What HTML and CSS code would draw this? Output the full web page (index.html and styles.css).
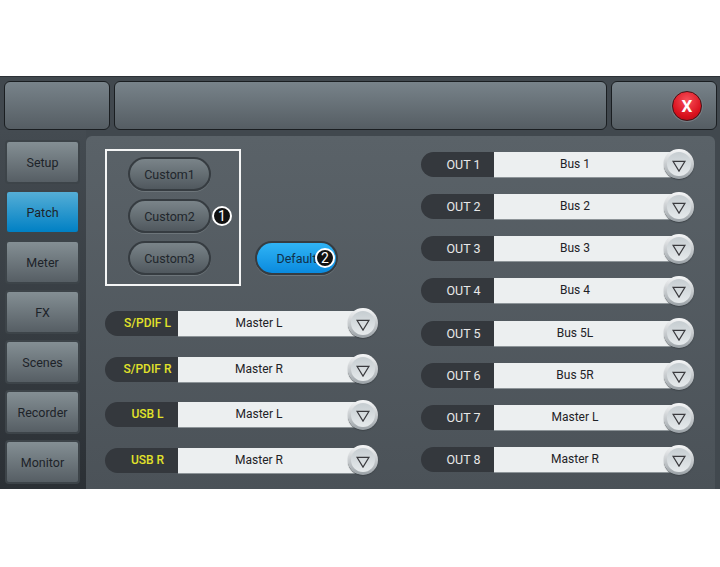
FILE: index.html
```html
<!DOCTYPE html>
<html lang="en">
<head>
    <meta charset="UTF-8">
    <title>Patch</title>
    <link rel="stylesheet" href="styles.css">
</head>
<body>
    <div class="app">
        <header class="topbar">
            <div class="top-panel top-left"></div>
            <div class="top-panel top-mid"></div>
            <div class="top-panel top-right">
                <button class="close-btn">X</button>
            </div>
        </header>

        <div class="content">
            <nav class="sidebar">
                <a class="side-btn">Setup</a>
                <a class="side-btn active">Patch</a>
                <a class="side-btn">Meter</a>
                <a class="side-btn">FX</a>
                <a class="side-btn">Scenes</a>
                <a class="side-btn">Recorder</a>
                <a class="side-btn">Monitor</a>
            </nav>

            <main class="main">
                <section class="col-left">
                    <div class="presets">
                        <div class="custom-box">
                            <button class="pill-btn">Custom1</button>
                            <button class="pill-btn">Custom2</button>
                            <button class="pill-btn">Custom3</button>
                            <span class="marker marker-one">1</span>
                        </div>
                        <button class="pill-btn default-btn">Default<span class="marker marker-two">2</span></button>
                    </div>

                    <div class="rows rows-left">
                        <div class="row">
                            <span class="row-label yellow">S/PDIF L</span>
                            <span class="row-value">Master L</span>
                            <span class="knob"><svg viewBox="0 0 16 14"><path d="M1 1.5H15L8 13Z"/></svg></span>
                        </div>
                        <div class="row">
                            <span class="row-label yellow">S/PDIF R</span>
                            <span class="row-value">Master R</span>
                            <span class="knob"><svg viewBox="0 0 16 14"><path d="M1 1.5H15L8 13Z"/></svg></span>
                        </div>
                        <div class="row">
                            <span class="row-label yellow">USB L</span>
                            <span class="row-value">Master L</span>
                            <span class="knob"><svg viewBox="0 0 16 14"><path d="M1 1.5H15L8 13Z"/></svg></span>
                        </div>
                        <div class="row">
                            <span class="row-label yellow">USB R</span>
                            <span class="row-value">Master R</span>
                            <span class="knob"><svg viewBox="0 0 16 14"><path d="M1 1.5H15L8 13Z"/></svg></span>
                        </div>
                    </div>
                </section>

                <section class="rows rows-right">
                    <div class="row">
                        <span class="row-label">OUT 1</span>
                        <span class="row-value">Bus 1</span>
                        <span class="knob"><svg viewBox="0 0 16 14"><path d="M1 1.5H15L8 13Z"/></svg></span>
                    </div>
                    <div class="row">
                        <span class="row-label">OUT 2</span>
                        <span class="row-value">Bus 2</span>
                        <span class="knob"><svg viewBox="0 0 16 14"><path d="M1 1.5H15L8 13Z"/></svg></span>
                    </div>
                    <div class="row">
                        <span class="row-label">OUT 3</span>
                        <span class="row-value">Bus 3</span>
                        <span class="knob"><svg viewBox="0 0 16 14"><path d="M1 1.5H15L8 13Z"/></svg></span>
                    </div>
                    <div class="row">
                        <span class="row-label">OUT 4</span>
                        <span class="row-value">Bus 4</span>
                        <span class="knob"><svg viewBox="0 0 16 14"><path d="M1 1.5H15L8 13Z"/></svg></span>
                    </div>
                    <div class="row">
                        <span class="row-label">OUT 5</span>
                        <span class="row-value">Bus 5L</span>
                        <span class="knob"><svg viewBox="0 0 16 14"><path d="M1 1.5H15L8 13Z"/></svg></span>
                    </div>
                    <div class="row">
                        <span class="row-label">OUT 6</span>
                        <span class="row-value">Bus 5R</span>
                        <span class="knob"><svg viewBox="0 0 16 14"><path d="M1 1.5H15L8 13Z"/></svg></span>
                    </div>
                    <div class="row">
                        <span class="row-label">OUT 7</span>
                        <span class="row-value">Master L</span>
                        <span class="knob"><svg viewBox="0 0 16 14"><path d="M1 1.5H15L8 13Z"/></svg></span>
                    </div>
                    <div class="row">
                        <span class="row-label">OUT 8</span>
                        <span class="row-value">Master R</span>
                        <span class="knob"><svg viewBox="0 0 16 14"><path d="M1 1.5H15L8 13Z"/></svg></span>
                    </div>
                </section>
            </main>
        </div>
    </div>
</body>
</html>
```

FILE: styles.css
```css
* {
    margin: 0;
    padding: 0;
    box-sizing: border-box;
    font-family: 'Roboto', sans-serif;
}

body {
    background: #ffffff;
    width: 720px;
    height: 567px;
    overflow: hidden;
}

.app {
    margin-top: 76px;
    height: 413px;
    background: #41484e;
    border-top: 1px solid #2c3136;
    display: flex;
    flex-direction: column;
}

/* Top bar */
.topbar {
    display: flex;
    gap: 4px;
    padding: 4px 3px 0 4px;
    height: 53px;
}

.top-panel {
    height: 49px;
    border: 1px solid #1a1e21;
    border-radius: 6px;
    background: linear-gradient(#78838a, #555d63);
}

.top-left { width: 106px; }
.top-mid { width: 493px; }

.top-right {
    width: 106px;
    display: flex;
    align-items: center;
    justify-content: flex-end;
    padding-right: 14px;
}

.close-btn {
    width: 30px;
    height: 30px;
    border-radius: 50%;
    border: 1px solid #4a1216;
    background: radial-gradient(circle at 50% 30%, #f8505a, #d9101c 65%, #a50a14);
    box-shadow: 0 0 0 1px #757e84;
    color: #ffffff;
    font-size: 17px;
    font-weight: 700;
}

/* Sidebar + main */
.content {
    flex: 1;
    display: flex;
    min-height: 0;
}

.sidebar {
    width: 86px;
    padding: 10px 0 0 5px;
    background: linear-gradient(#444b51, #2b3035);
    display: flex;
    flex-direction: column;
    gap: 6px;
}

.side-btn {
    width: 75px;
    height: 44px;
    display: flex;
    align-items: center;
    justify-content: center;
    font-size: 12.5px;
    color: #1d2329;
    border: 2px solid #3d4449;
    border-radius: 4px;
    background: linear-gradient(#848f94, #565e64);
}

.side-btn.active {
    background: linear-gradient(#55aed6, #0080c4);
}

.main {
    flex: 1;
    margin-top: 6px;
    margin-right: 5px;
    padding: 13px 0 0 19px;
    background: linear-gradient(#5a6268, #4b5258);
    border-radius: 6px 6px 0 0;
    display: flex;
}

.col-left {
    width: 316px;
}

.presets {
    display: flex;
    align-items: flex-end;
    gap: 14px;
}

.custom-box {
    position: relative;
    width: 136px;
    height: 137px;
    border: 2px solid #f4f5f5;
    display: flex;
    flex-direction: column;
    gap: 8px;
    padding: 6px 0 0 21px;
}

.pill-btn {
    width: 83px;
    height: 34px;
    border-radius: 17px;
    border: 2px solid #363c41;
    box-shadow: 0 1px 0 #6d757a;
    background: linear-gradient(#7a8489, #50585e);
    color: #1f262c;
    font-size: 12.5px;
}

.default-btn {
    position: relative;
    margin-bottom: 11px;
    background: linear-gradient(#30b4f5, #0a8ade);
    color: #10304a;
}

/* Numbered callouts on top of the screenshot */
.marker {
    position: absolute;
    width: 20px;
    height: 20px;
    border-radius: 50%;
    border: 2px solid #ffffff;
    background: #111111;
    color: #ffffff;
    font-size: 14px;
    line-height: 16px;
    text-align: center;
}

.marker-one {
    left: 105px;
    top: 55px;
}

.marker-two {
    left: 58px;
    top: 5px;
}

/* Routing rows */
.rows {
    display: flex;
    flex-direction: column;
}

.rows-left {
    margin-top: 24.4px;
    gap: 19.7px;
}

.rows-right {
    margin-top: 2.4px;
    gap: 16.2px;
}

.row {
    display: flex;
    align-items: center;
    height: 26px;
    width: 274px;
}

.row-label {
    width: 73px;
    height: 25px;
    line-height: 25px;
    padding-left: 12px;
    text-align: center;
    font-size: 12.5px;
    color: #e8e8e8;
    background: #34383d;
    border-radius: 13px 0 0 13px;
}

.row-label.yellow {
    color: #e2e22a;
    font-size: 12px;
    font-weight: 500;
}

.row-value {
    width: 180px;
    height: 25px;
    line-height: 25px;
    text-align: center;
    font-size: 12px;
    color: #1e2226;
    background: #eceff0;
    box-shadow: 0 1px 0 #8d9498;
    padding-right: 18px;
}

.knob {
    position: relative;
    flex: none;
    width: 30px;
    height: 30px;
    margin-left: -10px;
    border-radius: 50%;
    background: linear-gradient(#f6f7f8, #9aa1a6);
    box-shadow: 0 1px 1px #3f454a;
    display: flex;
    align-items: center;
    justify-content: center;
}

.knob::before {
    content: '';
    position: absolute;
    inset: 3px;
    border-radius: 50%;
    background: linear-gradient(#c6cdd1, #e6eaec);
}

.knob svg {
    position: relative;
    width: 14px;
    height: 12px;
    margin-top: 3px;
    fill: none;
    stroke: #3a3a3e;
    stroke-width: 1.4;
}
```
